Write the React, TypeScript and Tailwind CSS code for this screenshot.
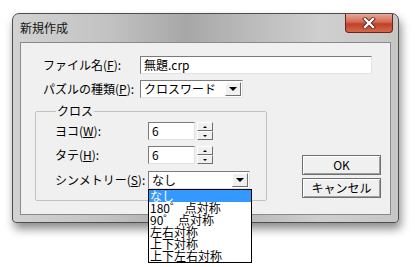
import React from "react";

const Acc = ({ c }: { c: string }) => <span className="underline">{c}</span>;

const Field = ({ value, w }: { value: string; w: string }) => (
  <div
    className={`${w} h-[18px] bg-white border border-[#7b7b7b] border-b-[#e3e3e3] border-r-[#e3e3e3] flex items-center pl-[3px] leading-none`}
  >
    {value}
  </div>
);

const ArrowBtn = () => (
  <div className="w-[16px] h-[14px] bg-[#f0f0f0] border border-white border-b-[#707070] border-r-[#707070] flex items-center justify-center">
    <div className="w-0 h-0 border-l-[4px] border-r-[4px] border-t-[4px] border-l-transparent border-r-transparent border-t-black" />
  </div>
);

const Combo = ({ value, w, children }: { value: string; w: string; children?: React.ReactNode }) => (
  <div
    className={`${w} h-[18px] relative bg-white border border-[#7b7b7b] border-b-[#e3e3e3] border-r-[#e3e3e3] flex items-center justify-between pl-[3px] pr-[1px] leading-none`}
  >
    <span>{value}</span>
    <ArrowBtn />
    {children}
  </div>
);

const Spin = () => (
  <div className="flex flex-col ml-[2px]">
    {["up", "down"].map((d) => (
      <div
        key={d}
        className="w-[16px] h-[9px] bg-[#f0f0f0] border border-white border-b-[#707070] border-r-[#707070] flex items-center justify-center"
      >
        {d === "up" ? (
          <div className="w-0 h-0 border-l-[2px] border-r-[2px] border-b-[2px] border-l-transparent border-r-transparent border-b-black" />
        ) : (
          <div className="w-0 h-0 border-l-[2px] border-r-[2px] border-t-[2px] border-l-transparent border-r-transparent border-t-black" />
        )}
      </div>
    ))}
  </div>
);

const Button = ({ label }: { label: string }) => (
  <div className="w-[79px] h-[20px] bg-[#f0f0f0] border border-[#707070] shadow-[inset_1px_1px_0_#ffffff,inset_-1px_-1px_0_#a0a0a0] flex items-center justify-center leading-none">
    {label}
  </div>
);

const items = ["なし", "180゜ 点対称", "90゜ 点対称", "左右対称", "上下対称", "上下左右対称"];

export default function App() {
  return (
    <div className="w-[415px] h-[267px] bg-white overflow-hidden pt-[13px] pl-[12px] font-['Noto_Sans_CJK_JP',sans-serif] text-[12px] text-black">
      <div className="w-[387px] h-[210px] flex flex-col rounded-t-[7px] rounded-b-[4px] border border-[#4e4e4e] bg-[linear-gradient(90deg,#d2d2d2_0%,#c2c2c2_25%,#a7a7a7_45%,#b9b9b9_60%,#cfcfcf_80%,#c6c6c6_100%)] shadow-[2px_6px_10px_rgba(0,0,0,0.45)] px-[7px] pb-[7px]">
        {/* タイトルバー */}
        <div className="h-[28px] flex items-start justify-between">
          <span className="mt-[6px] text-[12px] leading-[16px] text-[#111]">新規作成</span>
          <div className="w-[48px] h-[19px] mr-[-2px] rounded-b-[4px] border border-t-0 border-[#6b2418] bg-[linear-gradient(180deg,#e8a898_0%,#d46a52_45%,#c0402a_55%,#d46848_100%)] flex items-center justify-center">
            <svg width="14" height="12" viewBox="0 0 14 12">
              <path d="M3 2 L11 10 M11 2 L3 10" stroke="#5a1d12" strokeWidth="4" strokeLinecap="square" />
              <path d="M3 2 L11 10 M11 2 L3 10" stroke="#ffffff" strokeWidth="2.4" strokeLinecap="square" />
            </svg>
          </div>
        </div>

        {/* クライアント領域 */}
        <div className="flex-1 bg-[#f0f0f0] border border-[#8a8a8a] pl-[22px] pt-[13px]">
          <div className="flex items-center h-[17px]">
            <span className="w-[97px]">
              ファイル名(<Acc c="F" />):
            </span>
            <Field value="無題.crp" w="w-[232px]" />
          </div>
          <div className="flex items-center h-[18px] mt-[7px]">
            <span className="w-[97px]">
              パズルの種類(<Acc c="P" />):
            </span>
            <Combo value="クロスワード" w="w-[103px]" />
          </div>

          <div className="flex items-end ml-[-8px] mt-[5px]">
            <fieldset className="w-[232px] border border-[#c2c2c2] rounded-[2px] pl-[19px] pt-[3px] pb-[11px]">
              <legend className="ml-[1px] px-[1px] leading-[16px]">クロス</legend>
              <div className="flex items-center h-[18px]">
                <span className="w-[93px]">
                  ヨコ(<Acc c="W" />):
                </span>
                <Field value="6" w="w-[47px]" />
                <Spin />
              </div>
              <div className="flex items-center h-[18px] mt-[6px]">
                <span className="w-[93px]">
                  タテ(<Acc c="H" />):
                </span>
                <Field value="6" w="w-[47px]" />
                <Spin />
              </div>
              <div className="flex items-center h-[18px] mt-[7px]">
                <span className="w-[93px]">
                  シンメトリー(<Acc c="S" />):
                </span>
                <Combo value="なし" w="w-[102px]">
                  <div className="absolute left-[-1px] top-[17px] w-[104px] bg-white border border-black flex flex-col z-10">
                    {items.map((t, i) => (
                      <div
                        key={t}
                        className={`h-[12px] leading-[12px] pl-[1px] whitespace-pre ${i === 0 ? "bg-[#3399ff] text-white" : ""}`}
                      >
                        {t}
                      </div>
                    ))}
                  </div>
                </Combo>
              </div>
            </fieldset>
            <div className="flex flex-col gap-[3px] ml-[35px] mb-[3px]">
              <Button label="OK" />
              <Button label="キャンセル" />
            </div>
          </div>
        </div>
      </div>
    </div>
  );
}
